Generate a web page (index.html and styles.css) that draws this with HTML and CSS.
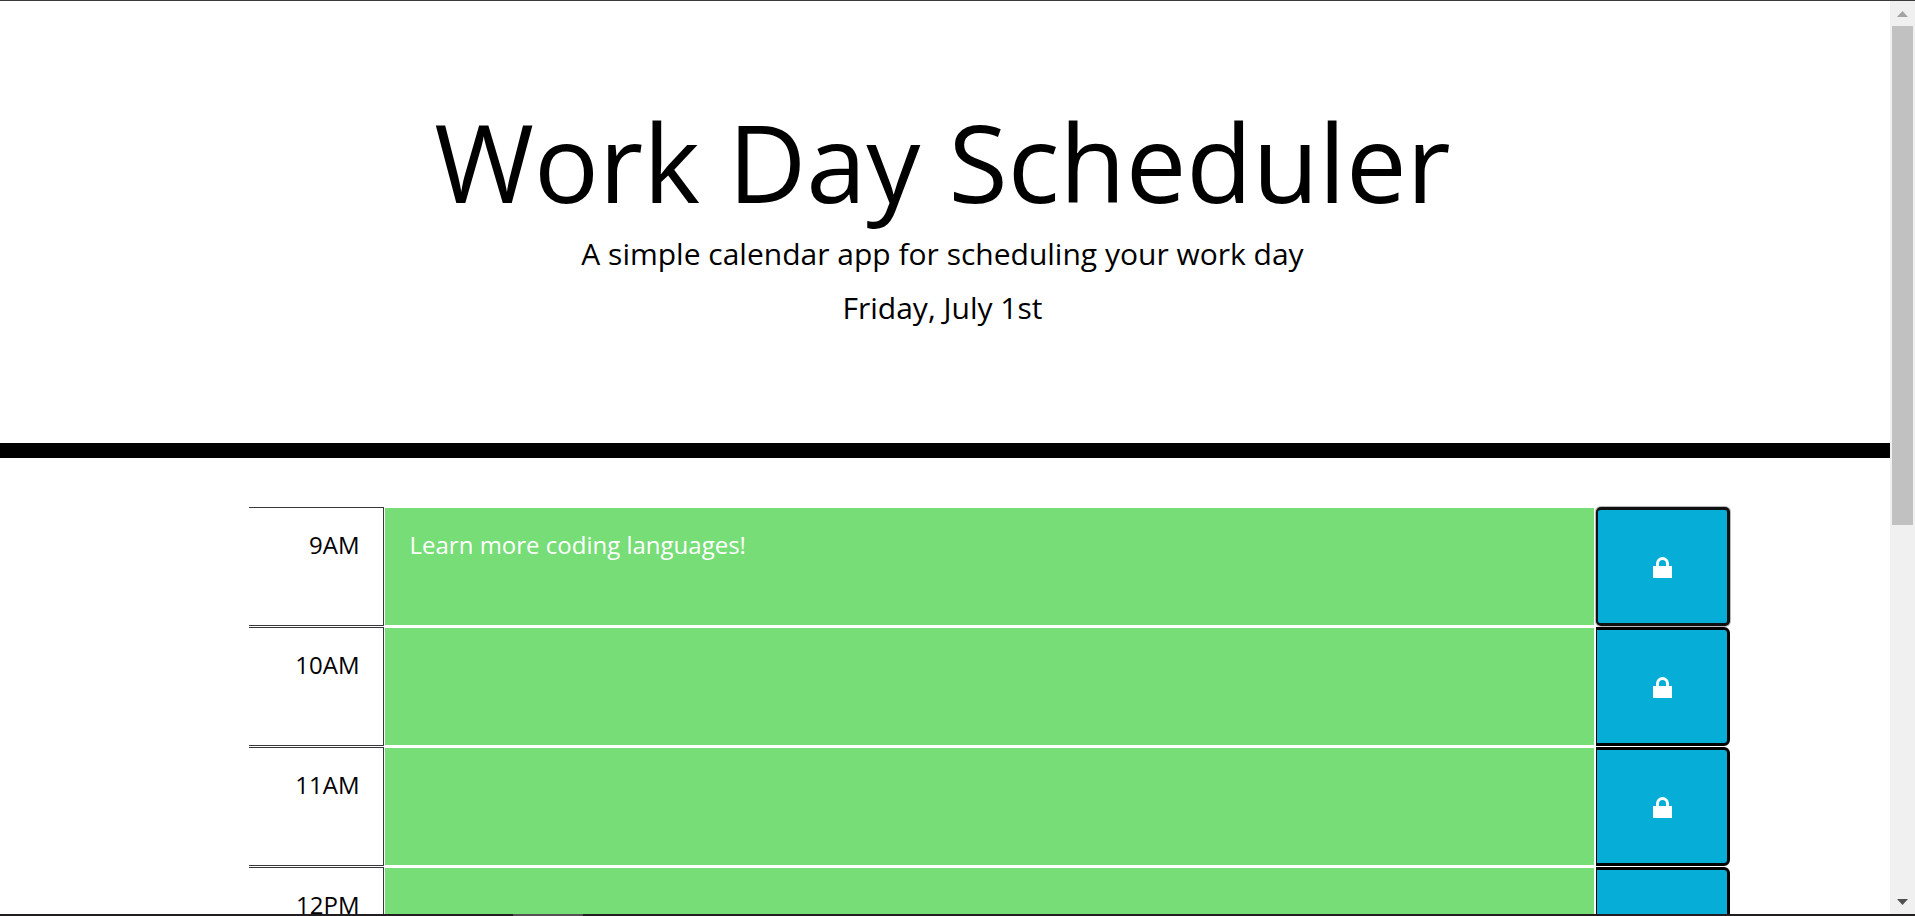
FILE: index.html
```html
<!DOCTYPE html>
<html lang="en">
<head>
<meta charset="utf-8">
<title>Work Day Scheduler</title>
<link rel="stylesheet" href="styles.css">
</head>
<body>
<div class="window">
  <div class="viewport">
    <div class="page">
      <header class="banner">
        <h1 class="title">Work Day Scheduler</h1>
        <p class="lead">A simple calendar app for scheduling your work day</p>
        <p class="lead">Friday, July 1st</p>
      </header>
      <main class="schedule">
        <div class="row">
          <label class="hour" for="h9">9AM</label>
          <textarea class="task" id="h9" spellcheck="false">Learn more coding languages!</textarea>
          <button class="save save-active" type="button" aria-label="Save 9AM"><svg class="lock" viewBox="0 0 19 21" aria-hidden="true"><path class="shackle" d="M4.500 10V6.500a5 5 0 0 1 10 0V10"/><path class="body" d="M0 9h19v12H0z"/></svg></button>
        </div>
        <div class="row">
          <label class="hour" for="h10">10AM</label>
          <textarea class="task" id="h10"></textarea>
          <button class="save" type="button" aria-label="Save 10AM"><svg class="lock" viewBox="0 0 19 21" aria-hidden="true"><path class="shackle" d="M4.500 10V6.500a5 5 0 0 1 10 0V10"/><path class="body" d="M0 9h19v12H0z"/></svg></button>
        </div>
        <div class="row">
          <label class="hour" for="h11">11AM</label>
          <textarea class="task" id="h11"></textarea>
          <button class="save" type="button" aria-label="Save 11AM"><svg class="lock" viewBox="0 0 19 21" aria-hidden="true"><path class="shackle" d="M4.500 10V6.500a5 5 0 0 1 10 0V10"/><path class="body" d="M0 9h19v12H0z"/></svg></button>
        </div>
        <div class="row">
          <label class="hour" for="h12">12PM</label>
          <textarea class="task" id="h12"></textarea>
          <button class="save" type="button" aria-label="Save 12PM"><svg class="lock" viewBox="0 0 19 21" aria-hidden="true"><path class="shackle" d="M4.500 10V6.500a5 5 0 0 1 10 0V10"/><path class="body" d="M0 9h19v12H0z"/></svg></button>
        </div>
      </main>
    </div>
    <div class="scrollbar" aria-hidden="true">
      <svg class="arrow" viewBox="0 0 11 6"><path class="arrow-up" d="M5.500 0L11 6H0z"/></svg>
      <div class="track"><div class="thumb"></div></div>
      <svg class="arrow" viewBox="0 0 11 6"><path class="arrow-down" d="M0 0h11L5.500 6z"/></svg>
    </div>
  </div>
  <div class="taskbar"><div class="taskbar-item"></div></div>
</div>
</body>
</html>
```
FILE: styles.css
```css
* {
  box-sizing: border-box;
}

body {
  margin: 0;
  background: #fff;
  color: #000;
  font-family: "Open Sans", sans-serif;
  font-size: 24px;
}

.window {
  display: flex;
  flex-direction: column;
  height: 100vh;
  overflow: hidden;
  border-top: 1px solid #3a3a3a;
}

.viewport {
  display: flex;
  flex: 1;
  min-height: 0;
}

.page {
  flex: 1;
  min-width: 0;
  overflow: hidden;
}

.banner {
  padding: 96px 5px 108px 0;
  border-bottom: 15px solid #000;
  text-align: center;
}

.title {
  margin: 0;
  font-size: 108px;
  font-weight: 400;
  line-height: 130px;
}

.lead {
  margin: 0;
  font-size: 30px;
  line-height: 54px;
}

.schedule {
  display: grid;
  gap: 1px;
  padding: 49px 8.47% 49px 13.17%;
}

.row {
  display: grid;
  grid-template-columns: 1fr 9fr 1fr;
  min-height: 119px;
}

.hour {
  padding: 19px 23px 0 0;
  border: 1px solid #38383d;
  border-left: 0;
  line-height: 36px;
  text-align: right;
}

.task {
  display: block;
  width: 100%;
  margin: 0;
  padding: 19px 25px;
  border: 1px solid #fff;
  outline: 0;
  background: #77dd77;
  color: #fff;
  font: inherit;
  line-height: 36px;
  overflow: hidden;
  resize: none;
}

.save {
  display: flex;
  align-items: center;
  justify-content: center;
  margin: 0 0 0 1px;
  padding: 2px 0 0;
  border: 3px solid #000;
  border-left-width: 1px;
  border-radius: 0 6px 6px 0;
  background: #06aed7;
  color: #fff;
}

.save-active {
  border-color: #101010;
  border-left-width: 2px;
  border-radius: 5px;
  box-shadow: 0 0 0 1px #b8b8b8;
}

.lock {
  width: 19px;
  height: 21px;
}

.shackle {
  fill: none;
  stroke: #fff;
  stroke-width: 3;
}

.body {
  fill: #fff;
}

.scrollbar {
  display: flex;
  flex-direction: column;
  align-items: center;
  gap: 9px;
  width: 25px;
  padding: 10px 2px 9px;
  background: #f0f0f0;
}

.arrow {
  width: 11px;
  height: 6px;
}

.arrow-up {
  fill: #a3a3a3;
}

.arrow-down {
  fill: #505050;
}

.track {
  flex: 1;
  width: 100%;
}

.thumb {
  height: 57.7%;
  background: #c1c1c1;
}

.taskbar {
  height: 2px;
  padding-left: 26.8%;
  background: #211d20;
}

.taskbar-item {
  width: 5%;
  height: 2px;
  background: #555053;
}
```
